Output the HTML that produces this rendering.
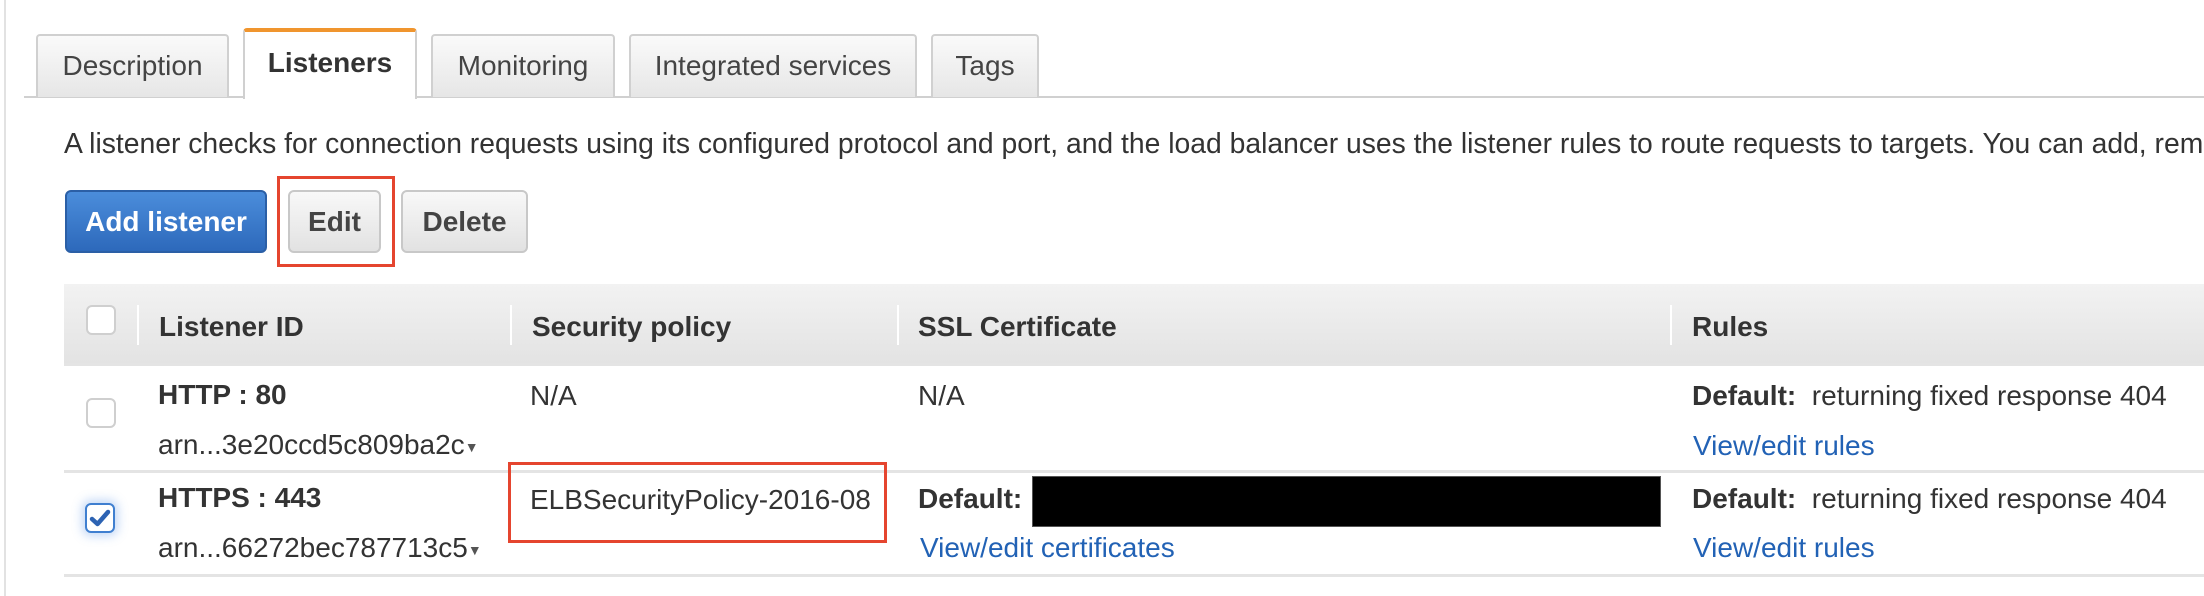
<!DOCTYPE html>
<html><head><meta charset="utf-8"><style>
*{box-sizing:border-box;margin:0;padding:0}
body{width:2204px;height:596px;background:#fff;position:relative;overflow:hidden;font-family:"Liberation Sans",Arial,sans-serif;color:#333}
.abs{position:absolute}
.vline{left:4px;top:0;width:2px;height:596px;background:#e2e2e2}
.tabline{left:24px;top:96px;right:0;height:2px;background:#d0d0d0}
.tab{position:absolute;top:34px;height:63px;border:2px solid #d0d0d0;border-bottom:none;border-radius:4px 4px 0 0;background:linear-gradient(#fafafa,#e6e6e6);font-size:28px;color:#444;text-align:center;line-height:60px;white-space:nowrap}
.tab.act{top:28px;height:71px;background:#fff;border-top:4px solid #f0952e;font-weight:bold;color:#333;line-height:62px}
.txt{white-space:nowrap;font-size:28px;line-height:32px}
.btn{position:absolute;top:190px;height:63px;border-radius:6px;border:2px solid #c8c8c8;background:linear-gradient(#f8f8f8,#e2e2e2);font-weight:bold;font-size:28px;color:#444;text-align:center;line-height:59px;white-space:nowrap}
.red{position:absolute;border:3px solid #e5452f}
.cb{position:absolute;width:30px;height:30px;border:2px solid #cfcfcf;border-radius:6px;background:#fff}
.sep{position:absolute;top:305px;width:2px;height:40px;background:#fff}
.b{font-weight:bold}
.link{color:#2262b5}
.rl{position:absolute;left:64px;right:0;height:3px;background:#e4e4e4}
.ar{font-size:14px;color:#555;vertical-align:2px}
</style></head><body>
<div class="abs vline"></div>
<div class="abs tabline"></div>
<div class="tab" style="left:36px;width:193px">Description</div>
<div class="tab act" style="left:243px;width:174px">Listeners</div>
<div class="tab" style="left:431px;width:184px">Monitoring</div>
<div class="tab" style="left:629px;width:288px">Integrated services</div>
<div class="tab" style="left:931px;width:108px">Tags</div>

<div class="abs txt" style="left:64px;top:127px;width:2140px;overflow:hidden;color:#333;font-size:28.3px">A listener checks for connection requests using its configured protocol and port, and the load balancer uses the listener rules to route requests to targets. You can add, remove, or update listeners and rules.</div>

<div class="btn" style="left:65px;width:202px;background:linear-gradient(#4b8ddb,#2d69bb);border-color:#2b5fa6;color:#fff">Add listener</div>
<div class="btn" style="left:288px;width:93px">Edit</div>
<div class="btn" style="left:401px;width:127px">Delete</div>
<div class="red" style="left:277px;top:176px;width:118px;height:91px"></div>

<div class="abs" style="left:64px;top:284px;right:0;height:79px;background:linear-gradient(#f2f2f2,#e3e3e3)"></div>
<div class="rl" style="top:363px"></div>
<div class="cb" style="left:86px;top:305px"></div>
<div class="sep" style="left:137px"></div>
<div class="sep" style="left:510px"></div>
<div class="sep" style="left:897px"></div>
<div class="sep" style="left:1670px"></div>
<div class="abs txt b" style="left:159px;top:311px">Listener ID</div>
<div class="abs txt b" style="left:532px;top:311px">Security policy</div>
<div class="abs txt b" style="left:918px;top:311px">SSL Certificate</div>
<div class="abs txt b" style="left:1692px;top:311px">Rules</div>

<div class="cb" style="left:86px;top:398px"></div>
<div class="abs txt b" style="left:158px;top:379px">HTTP : 80</div>
<div class="abs txt" style="left:158px;top:429px">arn...3e20ccd5c809ba2c<span class="ar">▼</span></div>
<div class="abs txt" style="left:530px;top:380px">N/A</div>
<div class="abs txt" style="left:918px;top:380px">N/A</div>
<div class="abs txt" style="left:1692px;top:380px"><span class="b">Default:</span>&nbsp; returning fixed response 404</div>
<div class="abs txt link" style="left:1693px;top:430px">View/edit rules</div>
<div class="rl" style="top:470px"></div>

<div class="cb" style="left:85px;top:503px;border-color:#3f7fd0;box-shadow:0 0 10px 3px rgba(80,140,230,.35)"><svg width="26" height="26" viewBox="0 0 26 26" style="position:absolute;left:0;top:0"><path d="M5 14 L10.5 19 L21 7" fill="none" stroke="#2d63b3" stroke-width="4.5" stroke-linecap="round" stroke-linejoin="round"/></svg></div>
<div class="abs txt b" style="left:158px;top:482px">HTTPS : 443</div>
<div class="abs txt" style="left:158px;top:532px">arn...66272bec787713c5<span class="ar">▼</span></div>
<div class="abs txt" style="left:530px;top:484px">ELBSecurityPolicy-2016-08</div>
<div class="red" style="left:508px;top:462px;width:379px;height:81px"></div>
<div class="abs txt b" style="left:918px;top:483px">Default:</div>
<div class="abs" style="left:1032px;top:476px;width:629px;height:51px;background:#000;border:1px solid #555"></div>
<div class="abs txt link" style="left:920px;top:532px">View/edit certificates</div>
<div class="abs txt" style="left:1692px;top:483px"><span class="b">Default:</span>&nbsp; returning fixed response 404</div>
<div class="abs txt link" style="left:1693px;top:532px">View/edit rules</div>
<div class="rl" style="top:574px"></div>
</body></html>
